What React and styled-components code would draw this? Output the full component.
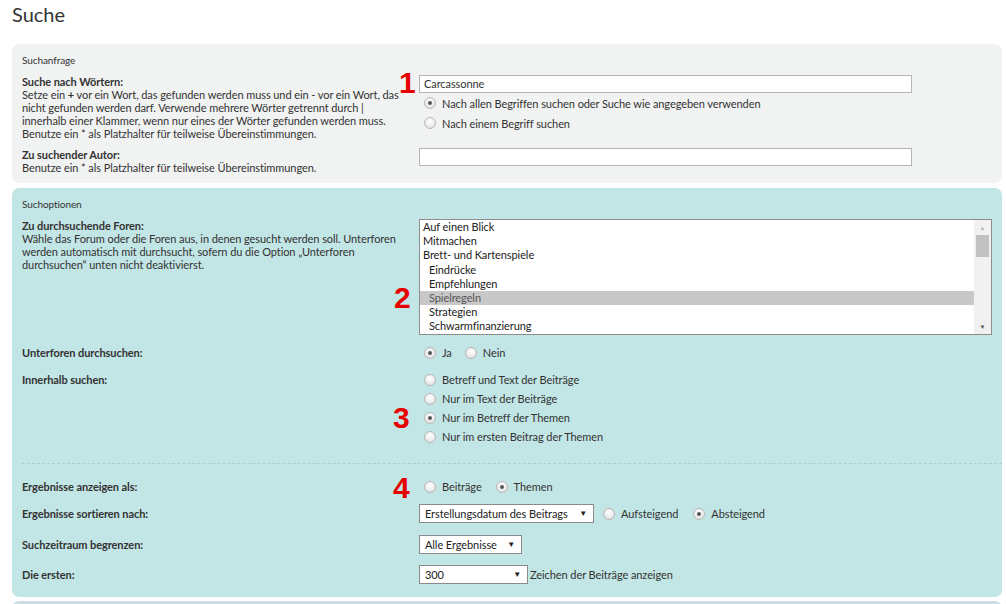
import React from 'react'
import styled, { createGlobalStyle } from 'styled-components'

const GlobalStyle = createGlobalStyle`
  html, body {
    margin: 0;
    padding: 0;
    background: #fff;
  }
  body {
    font-family: Lato, "Open Sans", "Liberation Sans", sans-serif;
    font-size: 11px;
    letter-spacing: -0.08px;
    color: #333;
  }
`

const colors = {
  text: '#333333',
  query: '#f1f2f2',
  options: '#c2e5e5',
  next: '#cadce6',
  red: '#e60000'
}

const Page = styled.div`
  width: 990px;
  padding: 0 4px 0 12px;
  height: 604px;
  overflow: hidden;
`

const Title = styled.h2`
  margin: 0;
  padding-top: 2px;
  height: 42px;
  font-size: 20px;
  font-weight: 400;
  line-height: 24px;
  letter-spacing: 0;
  color: #333;
`

const Panel = styled.div`
  background: ${(p) => p.$bg};
  border-radius: 7px;
  padding: 10px 10px ${(p) => p.$pb || 8}px;
  margin-bottom: ${(p) => p.$mb || 5}px;
`

const Legend = styled.div`
  font-size: 10px;
  line-height: 12px;
  color: #333;
  margin-bottom: ${(p) => p.$mb || 10}px;
`

const Row = styled.div`
  display: grid;
  grid-template-columns: 397px 1fr;
  margin-top: ${(p) => p.$mt || 0}px;
  align-items: ${(p) => (p.$center ? 'center' : 'start')};
`

const Term = styled.div`
  line-height: 13px;
  padding-right: 2px;
`

const Label = styled.div`
  font-weight: 700;
  color: ${colors.text};
  padding-top: ${(p) => p.$pt || 0}px;
`

const Hint = styled.div`
  font-weight: 400;
`

const Desc = styled.div`
  position: relative;
  display: flex;
  flex-direction: ${(p) => (p.$column ? 'column' : 'row')};
  align-items: ${(p) => (p.$column ? 'flex-start' : 'center')};
`

const Marker = styled.span`
  position: absolute;
  left: ${(p) => p.$left || -24}px;
  top: ${(p) => p.$top || 0}px;
  font-family: "Liberation Sans", Arial, sans-serif;
  font-weight: 700;
  font-size: 30px;
  line-height: 30px;
  letter-spacing: 0;
  color: ${colors.red};
`

const TextInput = styled.div`
  box-sizing: border-box;
  width: 493px;
  height: 18px;
  border: 1px solid #b4b4b4;
  background: #fff;
  padding: 0 4px;
  line-height: 16px;
  font-size: 11px;
`

const RadioList = styled.div`
  display: flex;
  flex-direction: column;
  padding-left: 5px;
`

const RadioRow = styled.label`
  display: flex;
  align-items: center;
  height: ${(p) => p.$h || 19}px;
  margin-right: ${(p) => p.$mr || 0}px;
  white-space: nowrap;
`

const Dot = styled.span`
  box-sizing: border-box;
  width: 12px;
  height: 12px;
  border-radius: 50%;
  border: 1px solid #b8b8b8;
  background: radial-gradient(circle at 50% 35%, #ffffff 0%, #ececec 55%, #d6d6d6 100%);
  display: inline-flex;
  align-items: center;
  justify-content: center;
  margin-right: 6px;
  flex: none;
  &::after {
    content: '';
    width: 4px;
    height: 4px;
    border-radius: 50%;
    background: ${(p) => (p.$on ? '#555' : 'transparent')};
  }
`

const Radio = ({ on, children, h, mr }) => (
  <RadioRow $h={h} $mr={mr}>
    <Dot $on={on} />
    {children}
  </RadioRow>
)

const ListBox = styled.div`
  box-sizing: border-box;
  width: 573px;
  height: 116px;
  border: 1px solid #8e8e8e;
  background: #fff;
  display: flex;
`

const ListItems = styled.div`
  flex: 1;
`

const ListItem = styled.div`
  height: 14.2px;
  line-height: 14px;
  padding-left: ${(p) => (p.$sub ? 9 : 3)}px;
  background: ${(p) => (p.$sel ? '#c8c8c8' : 'transparent')};
  color: ${(p) => (p.$sel ? '#555' : '#222')};
`

const ScrollBar = styled.div`
  width: 17px;
  background: #f1f1f1;
  display: flex;
  flex-direction: column;
  align-items: center;
`

const ScrollArrow = styled.div`
  height: 15px;
  width: 100%;
  display: flex;
  align-items: center;
  justify-content: center;
  color: ${(p) => (p.$dim ? '#b5b5b5' : '#505050')};
  font-size: 6px;
`

const Thumb = styled.div`
  width: 13px;
  height: 22px;
  background: #c1c1c1;
`

const Track = styled.div`
  flex: 1;
`

const Separator = styled.div`
  border-top: 1px dashed #aacfcf;
  margin: 17px -10px 0 0;
`

const Select = styled.div`
  box-sizing: border-box;
  width: ${(p) => p.$w}px;
  height: 19px;
  border: 1px solid #8a8a8a;
  background: #fff;
  display: flex;
  align-items: center;
  justify-content: space-between;
  padding: 0 6px 0 5px;
  margin-right: ${(p) => p.$mr || 0}px;
  color: #222;
  line-height: 17px;
  & > span:last-child {
    font-size: 8px;
    color: #222;
  }
`

const forums = [
  { name: 'Auf einen Blick' },
  { name: 'Mitmachen' },
  { name: 'Brett- und Kartenspiele' },
  { name: 'Eindrücke', sub: true },
  { name: 'Empfehlungen', sub: true },
  { name: 'Spielregeln', sub: true, sel: true },
  { name: 'Strategien', sub: true },
  { name: 'Schwarmfinanzierung', sub: true }
]

const App = () => (
  <Page>
    <GlobalStyle />
    <Title>Suche</Title>

    <Panel $bg={colors.query} $pb={9}>
      <Legend $mb={9}>Suchanfrage</Legend>
      <Row>
        <Term>
          <Label>Suche nach Wörtern:</Label>
          <Hint>
            Setze ein <b>+</b> vor ein Wort, das gefunden werden muss und ein - vor ein Wort, das
            <br />
            nicht gefunden werden darf. Verwende mehrere Wörter getrennt durch |
            <br />
            innerhalb einer Klammer, wenn nur eines der Wörter gefunden werden muss.
            <br />
            Benutze ein * als Platzhalter für teilweise Übereinstimmungen.
          </Hint>
        </Term>
        <Desc $column>
          <Marker $left={-20} $top={-7}>1</Marker>
          <TextInput>Carcassonne</TextInput>
          <RadioList>
            <Radio on h={20}>Nach allen Begriffen suchen oder Suche wie angegeben verwenden</Radio>
            <Radio h={20}>Nach einem Begriff suchen</Radio>
          </RadioList>
        </Desc>
      </Row>
      <Row $mt={8}>
        <Term>
          <Label>Zu suchender Autor:</Label>
          <Hint>Benutze ein * als Platzhalter für teilweise Übereinstimmungen.</Hint>
        </Term>
        <Desc>
          <TextInput />
        </Desc>
      </Row>
    </Panel>

    <Panel $bg={colors.options} $pb={13} $mb={4}>
      <Legend $mb={9}>Suchoptionen</Legend>
      <Row>
        <Term>
          <Label>Zu durchsuchende Foren:</Label>
          <Hint>
            Wähle das Forum oder die Foren aus, in denen gesucht werden soll. Unterforen werden
            automatisch mit durchsucht, sofern du die Option „Unterforen durchsuchen“ unten nicht
            deaktivierst.
          </Hint>
        </Term>
        <Desc>
          <Marker $left={-25} $top={64}>2</Marker>
          <ListBox>
            <ListItems>
              {forums.map((f) => (
                <ListItem key={f.name} $sub={f.sub} $sel={f.sel}>
                  {f.name}
                </ListItem>
              ))}
            </ListItems>
            <ScrollBar>
              <ScrollArrow $dim>▲</ScrollArrow>
              <Thumb />
              <Track />
              <ScrollArrow>▼</ScrollArrow>
            </ScrollBar>
          </ListBox>
        </Desc>
      </Row>

      <Row $mt={8} $center>
        <Term>
          <Label>Unterforen durchsuchen:</Label>
        </Term>
        <Desc>
          <RadioList>
            <Desc>
              <Radio on mr={13}>Ja</Radio>
              <Radio>Nein</Radio>
            </Desc>
          </RadioList>
        </Desc>
      </Row>

      <Row $mt={8}>
        <Term>
          <Label $pt={3}>Innerhalb suchen:</Label>
        </Term>
        <Desc $column>
          <Marker $left={-26} $top={33}>3</Marker>
          <RadioList>
            <Radio>Betreff und Text der Beiträge</Radio>
            <Radio>Nur im Text der Beiträge</Radio>
            <Radio on>Nur im Betreff der Themen</Radio>
            <Radio>Nur im ersten Beitrag der Themen</Radio>
          </RadioList>
        </Desc>
      </Row>

      <Separator />

      <Row $mt={13} $center>
        <Term>
          <Label>Ergebnisse anzeigen als:</Label>
        </Term>
        <Desc>
          <Marker $left={-26} $top={-4}>4</Marker>
          <RadioList>
            <Desc>
              <Radio mr={14}>Beiträge</Radio>
              <Radio on>Themen</Radio>
            </Desc>
          </RadioList>
        </Desc>
      </Row>

      <Row $mt={8} $center>
        <Term>
          <Label>Ergebnisse sortieren nach:</Label>
        </Term>
        <Desc>
          <Select $w={175} $mr={9}>
            <span>Erstellungsdatum des Beitrags</span>
            <span>▼</span>
          </Select>
          <Radio mr={15}>Aufsteigend</Radio>
          <Radio on>Absteigend</Radio>
        </Desc>
      </Row>

      <Row $mt={12} $center>
        <Term>
          <Label>Suchzeitraum begrenzen:</Label>
        </Term>
        <Desc>
          <Select $w={103}>
            <span>Alle Ergebnisse</span>
            <span>▼</span>
          </Select>
        </Desc>
      </Row>

      <Row $mt={11} $center>
        <Term>
          <Label>Die ersten:</Label>
        </Term>
        <Desc>
          <Select $w={109} $mr={2}>
            <span>300</span>
            <span>▼</span>
          </Select>
          <span>Zeichen der Beiträge anzeigen</span>
        </Desc>
      </Row>
    </Panel>

    <Panel $bg={colors.next} $pb={20} />
  </Page>
)

export default App
